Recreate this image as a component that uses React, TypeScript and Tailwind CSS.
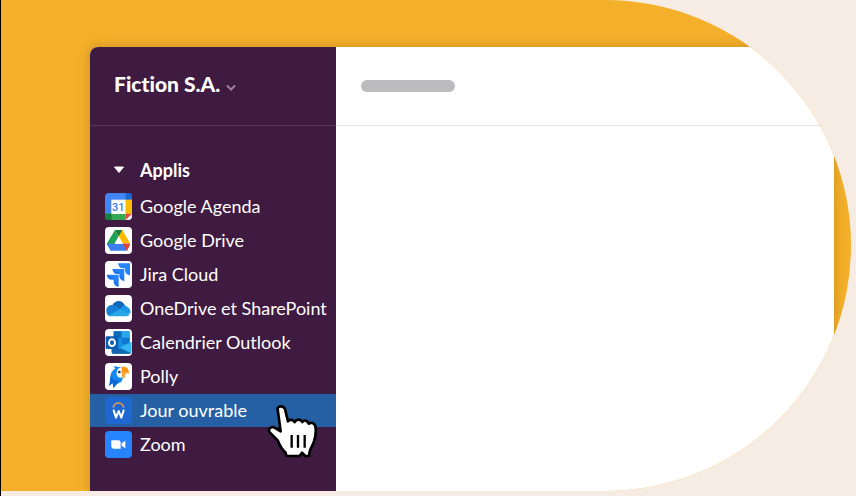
import type { ReactNode } from "react";

function Tile({ children, fill = "#ffffff" }: { children: ReactNode; fill?: string }) {
  return (
    <svg viewBox="0 0 81 81" className="size-[27px] shrink-0 overflow-hidden rounded-[4px]" aria-hidden="true">
      <rect width="81" height="81" fill={fill} />
      {children}
    </svg>
  );
}

function CalendarIcon() {
  return (
    <Tile fill="#4285f4">
      <rect x="62" width="19" height="20" fill="#1967d2" />
      <rect x="62" y="20" width="19" height="43" fill="#fbbc04" />
      <rect y="62" width="63" height="19" fill="#34a853" />
      <rect y="62" width="20" height="19" fill="#188038" />
      <rect x="19" y="20" width="43" height="43" fill="#ffffff" />
      <path d="M62 62H81V81H62Z" fill="#ffffff" />
      <path d="M62 62H81L62 81Z" fill="#ea4335" />
      <text x="40" y="53" textAnchor="middle" fontSize="33" fontWeight="500" fill="#3b7df0" fontFamily="Roboto, sans-serif">31</text>
    </Tile>
  );
}

function DriveIcon() {
  return (
    <Tile>
      <path d="M30 9L42 30L18 71L5 50Z" fill="#1fa15a" />
      <path d="M30 9H52L76 50H53Z" fill="#ffba00" />
      <path d="M5 50H76L66 71H17Z" fill="#3c7df0" />
      <path d="M53 50H76L66 71Z" fill="#ea4335" />
      <path d="M30 9H52L41 28Z" fill="#11803b" />
      <path d="M41 28L54 50H28Z" fill="#ffffff" />
    </Tile>
  );
}

function JiraIcon() {
  return (
    <Tile>
      <defs>
        <linearGradient id="jira-fold" x1="1" y1="0" x2="0" y2="1">
          <stop offset="0.3" stopColor="#2684ff" />
          <stop offset="0.8" stopColor="#0b5bd8" />
        </linearGradient>
      </defs>
      <path d="M39 7H75V43C66 42 60 36 60 28V22H54C46 22 40 16 39 7Z" fill="#2684ff" />
      <path d="M22 24H58V60C49 59 43 53 43 45V39H37C29 39 23 33 22 24Z" fill="url(#jira-fold)" />
      <path d="M5 41H41V77C32 76 26 70 26 62V56H20C12 56 6 50 5 41Z" fill="url(#jira-fold)" />
    </Tile>
  );
}

function OneDriveIcon() {
  return (
    <Tile>
      <path d="M22 31C29 14 53 12 61 34L48 46L22 39Z" fill="#0f67b8" />
      <path d="M4 48C3 35 14 27 27 31L52 46L15 64C8 62 4 56 4 48Z" fill="#1680d6" />
      <path d="M46 42C51 30 64 30 67 36C75 40 78 47 76 56L44 50Z" fill="#1c96e8" />
      <path d="M10 62L46 42L74 58C72 62 68 64 63 64H20C16 64 13 64 10 62Z" fill="#28a8ea" />
    </Tile>
  );
}

function OutlookIcon() {
  return (
    <Tile>
      <rect x="26" y="7" width="48" height="56" rx="3" fill="#1490df" />
      <path d="M26 7H50V26H26Z" fill="#0f6cbd" />
      <path d="M50 7H71Q74 7 74 10V26H50Z" fill="#28a8ea" />
      <path d="M50 26H74V45H50Z" fill="#0f78d4" />
      <path d="M20 46L50 56L79 39V69Q79 74 74 74H25Q20 74 20 69Z" fill="#1b8fe0" />
      <path d="M79 39V72L46 55Z" fill="#35b8f1" />
      <path d="M20 50L77 73L74 74H25Q20 74 20 69Z" fill="#1264b0" />
      <rect x="2" y="22" width="38" height="38" rx="3" fill="#0a5eb5" />
      <ellipse cx="21" cy="41" rx="9" ry="10" fill="none" stroke="#ffffff" strokeWidth="6" />
    </Tile>
  );
}

function PollyIcon() {
  return (
    <Tile>
      <path d="M25 11C34 9 39 11 43 15L31 20C32 15 29 13 25 11Z" fill="#1677e8" />
      <path d="M43 12C31 14 20 23 17 35C14 47 16 54 12 69L23 60L25 75L35 63C47 61 53 54 53 43L40 33L49 12Z" fill="#1488ee" />
      <path d="M19 39C25 54 36 55 44 47L36 63L25 75L23 60L12 69C17 56 14 47 19 39Z" fill="#0c69d8" />
      <path d="M36 24C39 16 45 13 50 13V44C38 46 32 36 36 24Z" fill="#ffffff" />
      <circle cx="43" cy="27" r="4" fill="#16345e" />
      <path d="M50 12C63 8 72 16 72 31C67 27 61 27 59 32L60 45C53 43 50 38 50 32Z" fill="#ff9410" />
      <path d="M50 29C57 24 65 25 72 31C63 29 59 33 60 45C53 43 50 38 50 29Z" fill="#f9a93a" />
    </Tile>
  );
}

function WorkdayIcon() {
  return (
    <Tile fill="#1f68cf">
      <path d="M25 30C30 14 50 14 56 30" fill="none" stroke="#dc9a50" strokeWidth="5" strokeLinecap="round" />
      <path d="M26 40L33 62L41 42L49 62L56 40" fill="none" stroke="#ffffff" strokeWidth="6" strokeLinejoin="round" strokeLinecap="round" />
    </Tile>
  );
}

function ZoomIcon() {
  return (
    <Tile fill="#2684ff">
      <path d="M19 28H40Q47 28 47 35V53H26Q19 53 19 46Z" fill="#ffffff" />
      <path d="M50 37L61 29V52L50 44Z" fill="#ffffff" />
    </Tile>
  );
}

function HandCursor() {
  return (
    <svg viewBox="21 31 153 159" className="pointer-events-none absolute top-[11px] left-[177px] z-10 h-[53px] w-[51px]" aria-hidden="true">
      <path
        d="M53 44C51 34 69 31 75 43L84 80C88 74 99 74 104 82C109 73 122 72 127 82C132 75 142 76 146 87C153 82 162 85 166 94C169 111 166 130 161 144C155 157 150 164 149 171L147 184H136L126 174L119 184H79L77 174C66 165 59 153 53 137L30 114C22 105 31 95 42 98L62 110Z"
        fill="#ffffff"
        stroke="#000000"
        strokeWidth="8"
        strokeLinejoin="round"
      />
      <path d="M95 121V159M114 121V159M134 121V159" stroke="#000000" strokeWidth="7" />
    </svg>
  );
}

const apps: { name: string; icon: ReactNode; active?: boolean }[] = [
  { name: "Google Agenda", icon: <CalendarIcon /> },
  { name: "Google Drive", icon: <DriveIcon /> },
  { name: "Jira Cloud", icon: <JiraIcon /> },
  { name: "OneDrive et SharePoint", icon: <OneDriveIcon /> },
  { name: "Calendrier Outlook", icon: <OutlookIcon /> },
  { name: "Polly", icon: <PollyIcon /> },
  { name: "Jour ouvrable", icon: <WorkdayIcon />, active: true },
  { name: "Zoom", icon: <ZoomIcon /> },
];

function Sidebar() {
  return (
    <aside className="w-[246px] shrink-0 rounded-tl-lg bg-[#3f1a41] text-white">
      <header className="flex h-[79px] items-center border-b border-[#583659] pb-1 pl-6">
        <button type="button" className="flex items-center gap-[6px] text-[21px] leading-[28px] font-black [font-variant-ligatures:none]">
          Fiction S.A.
          <svg viewBox="0 0 10 8" className="mt-2 h-2 w-[10px]" aria-hidden="true">
            <path d="M1.5 2L5 5.5L8.5 2" fill="none" stroke="#9b829d" strokeWidth="2" strokeLinecap="round" />
          </svg>
        </button>
      </header>
      <nav className="pt-7 text-[18px] leading-[24px]">
        <button type="button" aria-expanded="true" className="flex h-8 w-full items-center gap-[15px] pl-[23px] font-bold">
          <svg viewBox="0 0 12 8" className="h-2 w-3" aria-hidden="true">
            <path d="M1.5 1H10.5L6 6.5Z" fill="#ffffff" stroke="#ffffff" strokeWidth="1" strokeLinejoin="round" />
          </svg>
          Applis
        </button>
        <ul className="flex flex-col gap-px pt-1">
          {apps.map((app) => (
            <li key={app.name} className="relative">
              <button
                type="button"
                className={`flex h-[33px] w-full items-center gap-2 pb-px pl-[15px] whitespace-nowrap ${app.active ? "bg-[#2660a4]" : ""}`}
              >
                {app.icon}
                {app.name}
              </button>
              {app.active && <HandCursor />}
            </li>
          ))}
        </ul>
      </nav>
    </aside>
  );
}

export default function App() {
  return (
    <div className="flex min-h-screen border-l border-black bg-[#f6ece3] pr-[5px] pb-[5px] font-['Lato',sans-serif]">
      <main className="flex flex-1 overflow-hidden rounded-r-full bg-[#f4b02a] pt-[47px] pr-[17px] pl-[89px]">
        <div className="flex flex-1 rounded-tl-lg bg-white shadow-[0_0_12px_rgba(80,40,0,0.25)]">
          <Sidebar />
          <section className="flex-1">
            <header className="flex h-[79px] items-center border-b border-[#e2e2e2] pl-[25px]">
              <div className="h-3 w-[94px] rounded-full bg-[#bcbbbd]" />
            </header>
          </section>
        </div>
      </main>
    </div>
  );
}
